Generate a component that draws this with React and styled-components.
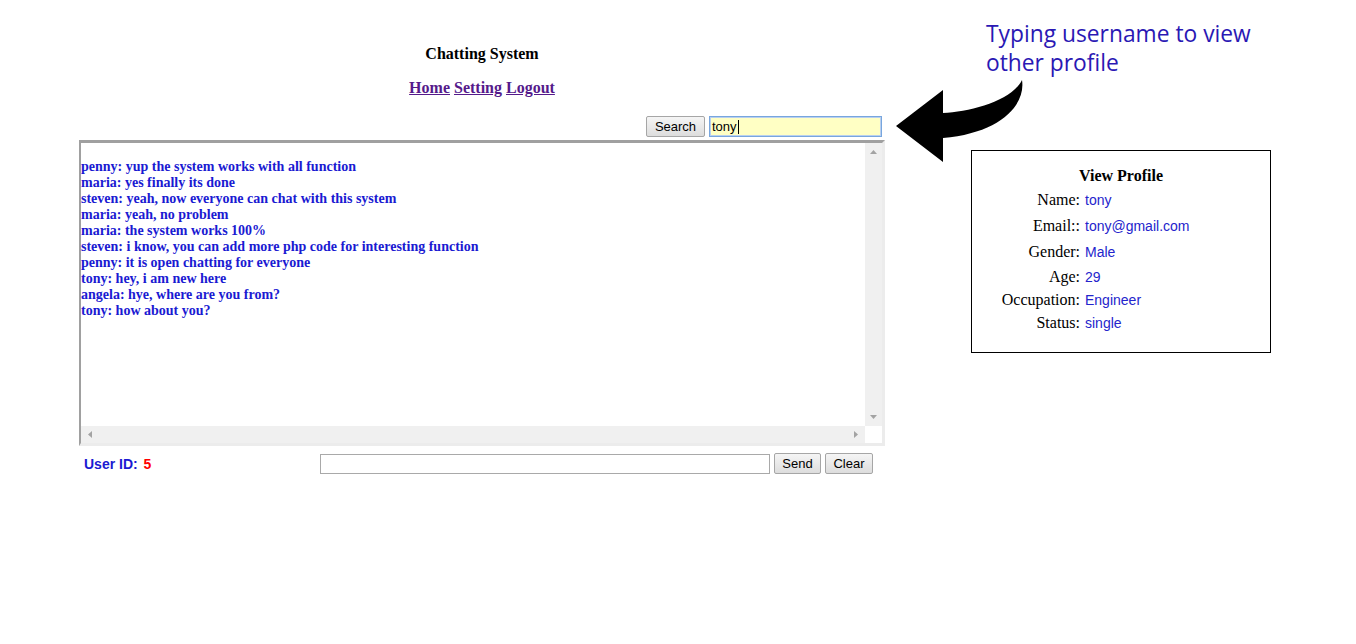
import React from 'react'
import styled, { createGlobalStyle } from 'styled-components'

const GlobalStyle = createGlobalStyle`
    html, body {
        margin: 0;
        padding: 0;
        background: #ffffff;
    }
    body {
        font-family: "Liberation Serif", "Times New Roman", serif;
        width: 1356px;
        height: 644px;
        overflow: hidden;
    }
`

const messages = [
    'penny: yup the system works with all function',
    'maria: yes finally its done',
    'steven: yeah, now everyone can chat with this system',
    'maria: yeah, no problem',
    'maria: the system works 100%',
    'steven: i know, you can add more php code for interesting function',
    'penny: it is open chatting for everyone',
    'tony: hey, i am new here',
    'angela: hye, where are you from?',
    'tony: how about you?',
]

const profile = [
    { label: 'Name:', value: 'tony', h: 26 },
    { label: 'Email::', value: 'tony@gmail.com', h: 26 },
    { label: 'Gender:', value: 'Male', h: 26 },
    { label: 'Age:', value: '29', h: 24 },
    { label: 'Occupation:', value: 'Engineer', h: 22 },
    { label: 'Status:', value: 'single', h: 23 },
]

function Arrow({ dir }) {
    const pts = {
        up: '0,4 3.5,0 7,4',
        down: '0,0 3.5,4 7,0',
        left: '4,0 0,3.5 4,7',
        right: '0,0 4,3.5 0,7',
    }
    const vertical = dir === 'up' || dir === 'down'
    return (
        <svg width={vertical ? 7 : 4} height={vertical ? 4 : 7} viewBox={vertical ? '0 0 7 4' : '0 0 4 7'}>
            <polygon points={pts[dir]} fill="#a3a3a3" />
        </svg>
    )
}

export default function App() {
    return (
        <>
            <GlobalStyle />
            <Page>
                <ChatColumn>
                    <Title>Chatting System</Title>
                    <Nav>
                        <NavLink href="#">Home</NavLink> <NavLink href="#">Setting</NavLink> <NavLink href="#">Logout</NavLink>
                    </Nav>
                    <SearchRow>
                        <Button $w={59}>Search</Button>
                        <SearchInput>
                            tony<Caret />
                        </SearchInput>
                    </SearchRow>
                    <ChatBox>
                        <Messages>
                            {messages.map((m, i) => (
                                <div key={i}>{m}</div>
                            ))}
                        </Messages>
                        <VBar>
                            <Arrow dir="up" />
                            <Arrow dir="down" />
                        </VBar>
                        <HBar>
                            <Arrow dir="left" />
                            <Arrow dir="right" />
                        </HBar>
                        <Corner />
                    </ChatBox>
                    <BottomRow>
                        <UserId>
                            User ID: <span>5</span>
                        </UserId>
                        <SendGroup>
                            <MessageInput />
                            <Button $w={47}>Send</Button>
                            <Button $w={48}>Clear</Button>
                        </SendGroup>
                    </BottomRow>
                </ChatColumn>

                <ProfileBox>
                    <ProfileTitle>View Profile</ProfileTitle>
                    {profile.map((p) => (
                        <ProfileRow key={p.label} $h={p.h}>
                            <Label>{p.label}</Label>
                            <Value>{p.value}</Value>
                        </ProfileRow>
                    ))}
                </ProfileBox>

                <Note>
                    Typing username to view
                    <br />
                    other profile
                </Note>
                <CurvedArrow width="140" height="95" viewBox="0 0 140 95">
                    <path
                        d="M6 51 L53 15 L53 38 C80 37 122 26 132 5 C136 30 110 58 53 63 L53 87 Z"
                        fill="#000"
                    />
                </CurvedArrow>
            </Page>
        </>
    )
}

const Page = styled.div`
    position: relative;
    display: flex;
    align-items: flex-start;
    padding-left: 79px;
    height: 644px;
    box-sizing: border-box;
`

const ChatColumn = styled.div`
    width: 806px;
    display: flex;
    flex-direction: column;
`

const Title = styled.div`
    margin-top: 45px;
    font-size: 16px;
    line-height: 18px;
    font-weight: 700;
    text-align: center;
    color: #000;
`

const Nav = styled.div`
    margin-top: 16px;
    font-size: 16px;
    line-height: 18px;
    font-weight: 700;
    text-align: center;
`

const NavLink = styled.a`
    color: #551a8b;
    text-decoration: underline;
`

const SearchRow = styled.div`
    margin-top: 19px;
    height: 21px;
    display: flex;
    justify-content: flex-end;
    align-items: center;
    gap: 4px;
    padding-right: 3px;
`

const Button = styled.div`
    width: ${({ $w }) => $w}px;
    height: 21px;
    box-sizing: border-box;
    display: flex;
    align-items: center;
    justify-content: center;
    font-family: "Liberation Sans", Arial, sans-serif;
    font-size: 13px;
    color: #000;
    background: linear-gradient(#f5f5f5, #dddddd);
    border: 1px solid #a6a6a6;
    border-radius: 2px;
`

const SearchInput = styled.div`
    width: 173px;
    height: 21px;
    box-sizing: border-box;
    display: flex;
    align-items: center;
    padding-left: 2px;
    font-family: "Liberation Sans", Arial, sans-serif;
    font-size: 13px;
    color: #000;
    background: #ffffc4;
    border: 1px solid #78a6de;
    box-shadow: inset 0 0 0 1px #b9d0ef;
`

const Caret = styled.span`
    display: inline-block;
    width: 1px;
    height: 14px;
    background: #000;
    margin-left: 1px;
`

const ChatBox = styled.div`
    margin-top: 3px;
    height: 306px;
    box-sizing: border-box;
    border-top: 3px solid #a0a0a0;
    border-left: 2px solid #a0a0a0;
    border-right: 3px solid #ececec;
    border-bottom: 3px solid #ececec;
    display: grid;
    grid-template-columns: 1fr 17px;
    grid-template-rows: 1fr 17px;
`

const Messages = styled.div`
    padding-top: 16px;
    font-size: 14px;
    line-height: 16px;
    font-weight: 700;
    color: #1a1ad2;
    white-space: nowrap;
    overflow: hidden;
`

const VBar = styled.div`
    background: #f0f0f0;
    display: flex;
    flex-direction: column;
    justify-content: space-between;
    align-items: center;
    padding: 7px 0 7px;
`

const HBar = styled.div`
    background: #f0f0f0;
    display: flex;
    justify-content: space-between;
    align-items: center;
    padding: 0 7px;
`

const Corner = styled.div`
    background: #ffffff;
`

const BottomRow = styled.div`
    margin-top: 7px;
    height: 21px;
    display: flex;
    align-items: center;
    justify-content: space-between;
    padding: 0 12px 0 5px;
`

const UserId = styled.div`
    font-family: "Liberation Sans", Arial, sans-serif;
    font-size: 14px;
    font-weight: 700;
    color: #1a1ad2;

    span {
        color: #ff0000;
        margin-left: 2px;
    }
`

const SendGroup = styled.div`
    display: flex;
    align-items: center;
    gap: 4px;
`

const MessageInput = styled.div`
    width: 450px;
    height: 20px;
    box-sizing: border-box;
    border: 1px solid #a9a9a9;
    background: #fff;
`

const ProfileBox = styled.div`
    margin-top: 150px;
    margin-left: 86px;
    width: 300px;
    height: 203px;
    box-sizing: border-box;
    border: 1px solid #000;
    padding-top: 15px;
`

const ProfileTitle = styled.div`
    font-size: 16px;
    line-height: 20px;
    font-weight: 700;
    text-align: center;
    color: #000;
    margin-bottom: 1px;
`

const ProfileRow = styled.div`
    height: ${({ $h }) => $h}px;
    display: grid;
    grid-template-columns: 108px 1fr;
    column-gap: 5px;
    align-items: center;
`

const Label = styled.div`
    text-align: right;
    font-size: 16px;
    color: #000;
`

const Value = styled.div`
    font-family: "Liberation Sans", Arial, sans-serif;
    font-size: 14px;
    color: #2424cc;
`

const Note = styled.div`
    position: absolute;
    left: 986px;
    top: 19px;
    font-family: "Open Sans", "Noto Sans", sans-serif;
    font-size: 22.8px;
    line-height: 29px;
    color: #2a18b4;
`

const CurvedArrow = styled.svg`
    position: absolute;
    left: 890px;
    top: 75px;
`
